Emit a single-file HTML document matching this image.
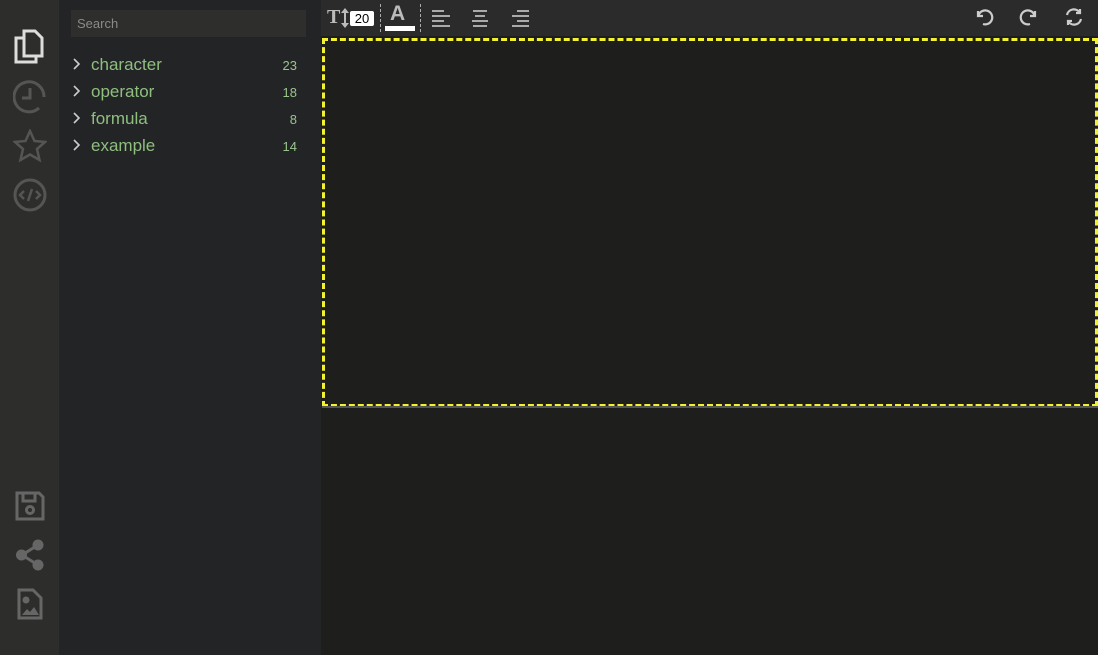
<!DOCTYPE html>
<html><head><meta charset="utf-8"><style>
*{margin:0;padding:0;box-sizing:border-box}
body{width:1098px;height:655px;background:#1e1e1c;font-family:"Liberation Sans",sans-serif;position:relative;overflow:hidden}
.rail{position:absolute;left:0;top:0;width:59px;height:655px;background:#2d2d2b}
.side{position:absolute;left:59px;top:0;width:262px;height:655px;background:#232426}
.search{position:absolute;left:12px;top:10px;width:235px;height:27px;background:#2e2e2d;color:#8a8a8a;font-size:13px;line-height:27px;padding-left:6px}
.item{position:absolute;left:12px;width:228px;height:20px;font-size:17px;color:#8fbf7f}
.item svg{left:2px;top:3px}
.item .t{position:absolute;left:20px;top:0}
.item .n{position:absolute;right:2px;top:3px;font-size:13px;color:#9ac48c}
.tb{position:absolute;left:321px;top:0;width:777px;height:36px;background:#2b2b2b}
.box{position:absolute;left:322px;top:38px;width:776px;height:369px;border:3px dashed #f2f230}
.line{position:absolute;left:322px;top:406px;width:776px;height:2px;background:#555}
svg{position:absolute}
</style></head><body>
<div class="rail"></div>
<div class="side">
<div class="search">Search</div>
<div class="item" style="top:55px"><svg width="8" height="12" viewBox="0 0 8 12" fill="none" stroke="#ccc" stroke-width="1.6"><path d="M1 1l5 5-5 5"/></svg><span class="t">character</span><span class="n">23</span></div>
<div class="item" style="top:82px"><svg width="8" height="12" viewBox="0 0 8 12" fill="none" stroke="#ccc" stroke-width="1.6"><path d="M1 1l5 5-5 5"/></svg><span class="t">operator</span><span class="n">18</span></div>
<div class="item" style="top:109px"><svg width="8" height="12" viewBox="0 0 8 12" fill="none" stroke="#ccc" stroke-width="1.6"><path d="M1 1l5 5-5 5"/></svg><span class="t">formula</span><span class="n">8</span></div>
<div class="item" style="top:136px"><svg width="8" height="12" viewBox="0 0 8 12" fill="none" stroke="#ccc" stroke-width="1.6"><path d="M1 1l5 5-5 5"/></svg><span class="t">example</span><span class="n">14</span></div>
</div>
<svg style="left:13px;top:29px" width="32" height="36" viewBox="0 0 32 36" fill="none" stroke="#ddd" stroke-width="3"><path d="M11 2h11l7 7v18H11z"/><path d="M11 9H3v24h20v-6"/></svg>
<svg style="left:13px;top:80px" width="34" height="34" viewBox="0 0 34 34" fill="none" stroke="#555" stroke-width="3"><path d="M26 28A15 15 0 1 1 31 17"/><path d="M17 8v10H9"/></svg>
<svg style="left:13px;top:129px" width="34" height="34" viewBox="0 0 34 34" fill="none" stroke="#555" stroke-width="2.5"><path d="M17 2l4.5 10 10.5 1-8 7 2.5 11L17 25.5 7.5 31 10 20l-8-7 10.5-1z"/></svg>
<svg style="left:13px;top:178px" width="34" height="34" viewBox="0 0 34 34" fill="none" stroke="#555" stroke-width="3"><circle cx="17" cy="17" r="15"/><path d="M11 13l-4 4 4 4M23 13l4 4-4 4M19 11l-4 12" stroke-width="2.5"/></svg>
<svg style="left:15px;top:491px" width="30" height="30" viewBox="0 0 30 30" fill="none" stroke="#666" stroke-width="3"><path d="M2 2h22l4 4v22H2z"/><path d="M8 2v8h12V2"/><circle cx="15" cy="19" r="3.5"/></svg>
<svg style="left:15px;top:539px" width="30" height="32" viewBox="0 0 30 32"><path d="M23 6L7 16l16 10" fill="none" stroke="#666" stroke-width="3"/><circle cx="23" cy="6" r="5.5" fill="#666"/><circle cx="6.5" cy="16" r="5.5" fill="#666"/><circle cx="23" cy="26" r="5.5" fill="#666"/></svg>
<svg style="left:17px;top:588px" width="26" height="32" viewBox="0 0 26 32" fill="none" stroke="#666" stroke-width="3"><path d="M2 2h14l8 8v20H2z"/><circle cx="9" cy="12" r="2" fill="#666"/><path d="M5 27l5-6 3 3 4-5 5 8z" fill="#666" stroke="none"/></svg>
<div class="tb"></div>
<div style="position:absolute;left:327px;top:6px;font:bold 20px 'Liberation Serif',serif;color:#bbb">T</div>
<svg style="left:340px;top:8px" width="10" height="20" viewBox="0 0 10 20" fill="#bbb"><path d="M5 0l4 5H6v10h3l-4 5-4-5h3V5H1z"/></svg>
<div style="position:absolute;left:350px;top:11px;width:24px;height:15px;background:#fff;border-radius:2px;font-size:13px;line-height:15px;text-align:center;color:#000">20</div>
<div style="position:absolute;left:380px;top:4px;height:28px;border-left:1px dashed #aaa"></div>
<div style="position:absolute;left:390px;top:2px;font:bold 21px 'Liberation Sans',sans-serif;color:#bbb">A</div>
<div style="position:absolute;left:385px;top:26px;width:30px;height:5px;background:#fff"></div>
<div style="position:absolute;left:420px;top:4px;height:28px;border-left:1px dashed #aaa"></div>
<svg style="left:431px;top:9px" width="100" height="18" viewBox="0 0 100 18" stroke="#aaa" stroke-width="2"><path d="M1 2h12M1 7h18M1 12h12M1 17h18"/><path d="M42 2h14M44 7h10M41 12h16M42 17h14"/><path d="M86 2h12M81 7h17M86 12h12M81 17h17"/></svg>
<svg style="left:974px;top:7px" width="110" height="20" viewBox="0 0 110 20" fill="none" stroke="#ccc" stroke-width="2.2"><path d="M4 4v5h5"/><path d="M4.5 8.5A7 7 0 1 1 9 17"/><path d="M61 4v5h-5"/><path d="M60.5 8.5A7 7 0 1 0 56 17"/><path d="M93 8a7 7 0 0 1 13-2M107 12a7 7 0 0 1-13 2"/><path d="M106 2v4h-4M94 18v-4h4"/></svg>
<div class="box"></div>
<div class="line"></div>
</body></html>
